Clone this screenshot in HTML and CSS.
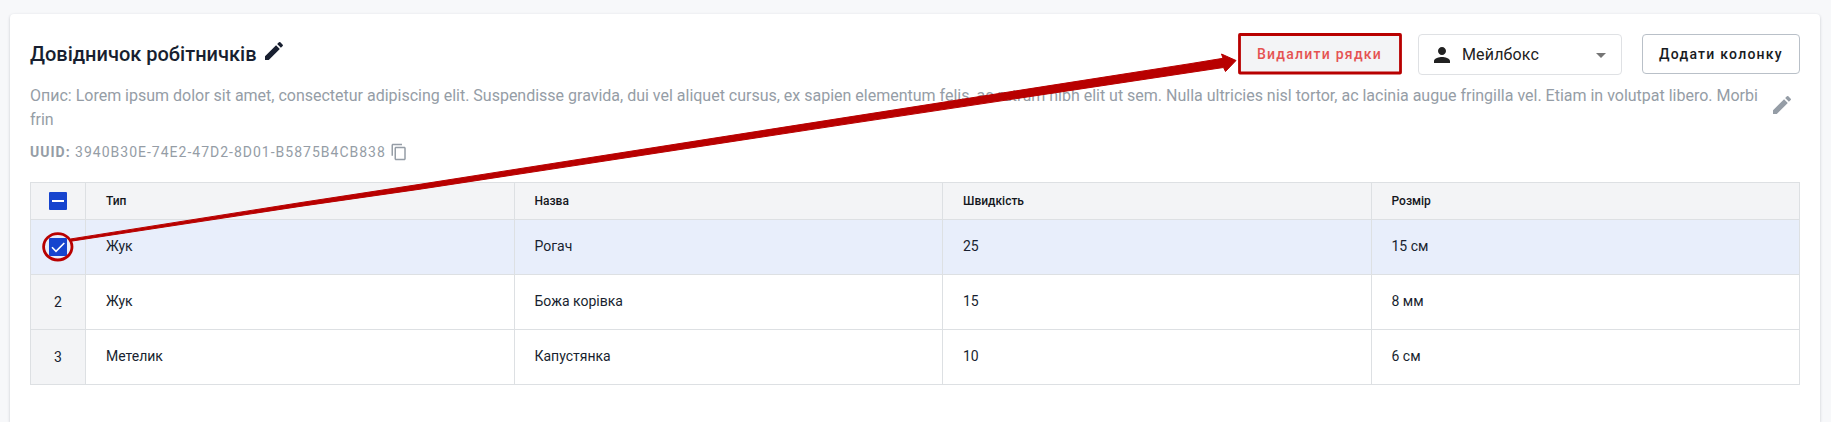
FILE: index.html
```html
<!DOCTYPE html>
<html lang="uk">
<head>
<meta charset="utf-8">
<title>Довідничок робітничків</title>
<link rel="stylesheet" href="styles.css">
</head>
<body>
<main class="card">
  <header class="head">
    <h1 class="title">Довідничок робітничків</h1>
    <svg class="icon title-edit" viewBox="0 0 24 24"><path d="M3 17.25V21h3.75L17.81 9.94l-3.75-3.75L3 17.25zM20.71 7.04c.39-.39.39-1.02 0-1.41l-2.34-2.34a.996.996 0 0 0-1.41 0l-1.83 1.83 3.75 3.75 1.83-1.83z"/></svg>
    <div class="actions">
      <button class="btn btn-delete">Видалити рядки</button>
      <div class="select">
        <svg class="icon" viewBox="0 0 24 24"><path d="M12 12c2.21 0 4-1.79 4-4s-1.79-4-4-4-4 1.79-4 4 1.79 4 4 4zm0 2c-2.67 0-8 1.34-8 4v2h16v-2c0-2.66-5.33-4-8-4z"/></svg>
        <span class="select-value">Мейлбокс</span>
        <svg class="icon caret" viewBox="0 0 24 24"><path d="M7 10l5 5 5-5z"/></svg>
      </div>
      <button class="btn btn-add">Додати колонку</button>
    </div>
  </header>
  <section class="about">
    <p class="desc">Опис: Lorem ipsum dolor sit amet, consectetur adipiscing elit. Suspendisse gravida, dui vel aliquet cursus, ex sapien elementum felis, ac rutrum nibh elit ut sem. Nulla ultricies nisl tortor, ac lacinia augue fringilla vel. Etiam in volutpat libero. Morbi frin</p>
    <svg class="icon desc-edit" viewBox="0 0 24 24"><path d="M3 17.25V21h3.75L17.81 9.94l-3.75-3.75L3 17.25zM20.71 7.04c.39-.39.39-1.02 0-1.41l-2.34-2.34a.996.996 0 0 0-1.41 0l-1.83 1.83 3.75 3.75 1.83-1.83z"/></svg>
  </section>
  <div class="uuid"><span><b>UUID:</b> 3940B30E-74E2-47D2-8D01-B5875B4CB838</span>
    <svg class="copy" viewBox="0 0 24 24"><path d="M16 1H4c-1.1 0-2 .9-2 2v14h2V3h12V1zm3 4H8c-1.1 0-2 .9-2 2v14c0 1.1.9 2 2 2h11c1.1 0 2-.9 2-2V7c0-1.1-.9-2-2-2zm0 16H8V7h11v14z"/></svg>
  </div>
  <table class="grid">
    <colgroup><col class="col-check"><col><col><col><col></colgroup>
    <thead>
      <tr>
        <th class="mark"><svg class="box" viewBox="0 0 18 18"><rect width="18" height="18" rx="1"/><path d="M3 9h12"/></svg></th>
        <th>Тип</th><th>Назва</th><th>Швидкість</th><th>Розмір</th>
      </tr>
    </thead>
    <tbody>
      <tr class="selected">
        <td class="mark"><svg class="box" viewBox="0 0 18 18"><rect width="18" height="18" rx="1"/><path class="tick" d="M3 9.3l4 4L15.300 5"/></svg></td>
        <td>Жук</td><td>Рогач</td><td>25</td><td>15 см</td>
      </tr>
      <tr><td class="mark">2</td><td>Жук</td><td>Божа корівка</td><td>15</td><td>8 мм</td></tr>
      <tr><td class="mark">3</td><td>Метелик</td><td>Капустянка</td><td>10</td><td>6 см</td></tr>
    </tbody>
  </table>
</main>
<svg class="callout" viewBox="0 0 1831 422">
  <ellipse cx="57.800" cy="246.800" rx="14.200" ry="13.200"/>
  <rect x="1239.500" y="34.500" width="161" height="38.500" rx=".5"/>
  <path class="arrow" d="M71 238.900L300 202.700L420 184.300L850 116.800L1190 63.700L1223 58.300L1221.500 54L1236 60.500L1225.500 71.500L1223.500 67.500L1190 72.500L850 123.600L420 189.200L300 206.400L71 241.200z"/>
</svg>
</body>
</html>
```
FILE: styles.css
```css
* { box-sizing: border-box; }

body {
  margin: 0;
  height: 422px;
  overflow: hidden;
  padding: 14px 11px 0 10px;
  background: #f7f8fa;
  color: #181f30;
  font-family: Roboto, "Noto Sans", sans-serif;
}

.card {
  height: 408px;
  padding: 20px;
  background: #fff;
  border-radius: 4px 4px 0 0;
  box-shadow: 0 1px 3px rgba(24, 31, 48, .22);
}

.head { display: flex; height: 41px; }

.title {
  margin: 8px 0 0;
  font-size: 20px;
  font-weight: 500;
  line-height: 24px;
}

.icon { width: 24px; height: 24px; fill: currentColor; flex: none; }
.title-edit { margin: 5px 0 0 5px; }

.actions { display: flex; align-items: flex-start; margin-left: auto; }

.btn {
  height: 40px;
  padding: 0;
  border-radius: 4px;
  font: 500 14px/20px Roboto, "Noto Sans", sans-serif;
  letter-spacing: 1.25px;
  white-space: nowrap;
}

.btn-delete {
  width: 162px;
  margin-right: 17px;
  padding-right: 1px;
  border: 0;
  background: #f3f4f6;
  color: #e55252;
}

.btn-add {
  width: 158px;
  border: 1px solid #b9c0c8;
  background: #fff;
  color: #181b22;
}

.select {
  display: flex;
  align-items: center;
  width: 204px;
  height: 41px;
  margin-right: 20px;
  padding: 0 8px 0 11px;
  border: 1px solid #dfe1e4;
  border-radius: 4px;
  color: #212121;
}

.select-value { flex: 1; padding-left: 8px; font-size: 16px; letter-spacing: .15px; }
.caret { color: #757575; }

.about { display: flex; margin-top: 8px; color: #959da6; }
.desc { flex: 1; margin: 1px 0 0; font-size: 16px; line-height: 24px; letter-spacing: -.006px; }
.desc-edit { margin: 10px 6px 0 8px; }

.uuid {
  display: flex;
  align-items: center;
  height: 20px;
  margin-top: 10px;
  color: #959da6;
  font-size: 14px;
  letter-spacing: 1px;
}
.uuid b { font-weight: 700; }
.copy { width: 18px; height: 18px; margin-left: 4px; fill: currentColor; }

.grid {
  width: 1770px;
  margin-top: 20px;
  table-layout: fixed;
  border-collapse: collapse;
}
.col-check { width: 55px; }

.grid th, .grid td {
  padding: 0 20px;
  border: 1px solid #dde0e3;
  text-align: left;
}
.grid th {
  height: 37px;
  background: #f3f4f6;
  color: #14171d;
  font-size: 12px;
  font-weight: 500;
}
.grid td { height: 55px; padding-bottom: 2px; font-size: 14px; }
.grid .mark { padding: 0; background: #f3f4f6; text-align: center; }
.grid .selected td { background: #e8eefb; }

.box { display: block; width: 18px; height: 18px; margin: 0 auto; fill: #1644ce; }
.box path { fill: none; stroke: #fff; stroke-width: 2; }
.box .tick { stroke-width: 1.6; }

.callout {
  position: absolute;
  top: 0;
  left: 0;
  width: 1831px;
  height: 422px;
  fill: none;
  stroke: #b80000;
  stroke-width: 2.800;
  stroke-linejoin: round;
  pointer-events: none;
}
.callout .arrow { fill: #b80000; stroke-width: 1; }
```
